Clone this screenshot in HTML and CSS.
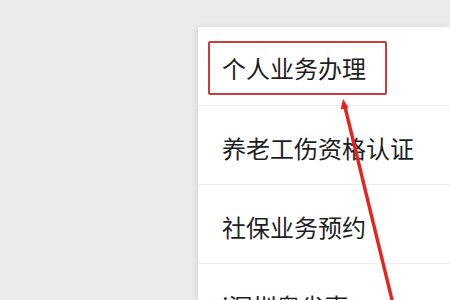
FILE: index.html
```html
<!DOCTYPE html>
<html lang="zh-CN">
<head>
<meta charset="utf-8">
<link rel="stylesheet" href="styles.css">
</head>
<body>
<div class="page">
  <div class="panel">
    <div class="item"><span class="highlight">个人业务办理</span></div>
    <div class="item">养老工伤资格认证</div>
    <div class="item">社保业务预约</div>
    <div class="item">i深圳粤省事</div>
  </div>
  <svg class="arrow" width="450" height="300" viewBox="0 0 450 300">
    <line x1="393" y1="304" x2="345" y2="107" stroke="#e8231f" stroke-width="3.4"/>
    <polygon points="343,99 348.6,107.5 340.6,109.5" fill="#e8231f"/>
  </svg>
</div>
</body>
</html>
```
FILE: styles.css
```css
html, body {
  margin: 0;
  padding: 0;
  width: 450px;
  height: 300px;
  overflow: hidden;
  background: #ebebeb;
}
.page {
  position: relative;
  display: flex;
  width: 450px;
  height: 300px;
  padding: 27px 0 0 198px;
  box-sizing: border-box;
}
.panel {
  flex: 1;
  background: #ffffff;
  box-shadow: -2px 0 6px rgba(0, 0, 0, 0.08);
  display: flex;
  flex-direction: column;
}
.item {
  flex: none;
  height: 79px;
  box-sizing: border-box;
  border-bottom: 1px solid #efefef;
  padding: 4px 0 0 24px;
  display: flex;
  align-items: center;
  font-family: "Noto Sans CJK SC", sans-serif;
  font-size: 24px;
  color: #1e1e1e;
  white-space: nowrap;
}
.highlight {
  display: inline-block;
  margin-left: -14px;
  padding: 0 19px 0 12px;
  line-height: 50px;
  border: 2px solid #cc3a3a;
  border-radius: 2px;
}
.arrow {
  position: absolute;
  left: 0;
  top: 0;
}
```
